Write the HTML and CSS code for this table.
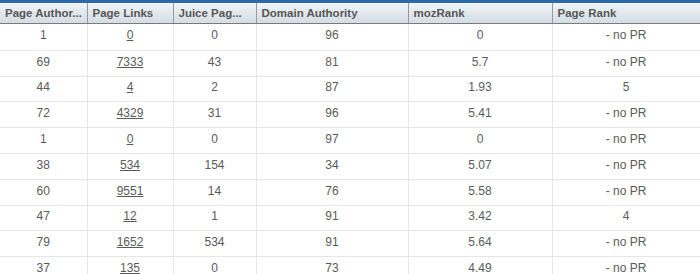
FILE: index.html
```html
<!DOCTYPE html>
<html>
<head>
<meta charset="utf-8">
<link rel="stylesheet" href="styles.css">
</head>
<body>
<div class="topbar"></div>
<table class="grid">
<colgroup>
<col class="c1"><col class="c2"><col class="c3"><col class="c4"><col class="c5"><col class="c6">
</colgroup>
<thead>
<tr><th>Page Author...</th><th>Page Links</th><th>Juice Pag...</th><th>Domain Authority</th><th>mozRank</th><th>Page Rank</th></tr>
</thead>
<tbody>
<tr><td>1</td><td><a href="#">0</a></td><td>0</td><td>96</td><td>0</td><td>- no PR</td></tr>
<tr><td>69</td><td><a href="#">7333</a></td><td>43</td><td>81</td><td>5.7</td><td>- no PR</td></tr>
<tr><td>44</td><td><a href="#">4</a></td><td>2</td><td>87</td><td>1.93</td><td>5</td></tr>
<tr><td>72</td><td><a href="#">4329</a></td><td>31</td><td>96</td><td>5.41</td><td>- no PR</td></tr>
<tr><td>1</td><td><a href="#">0</a></td><td>0</td><td>97</td><td>0</td><td>- no PR</td></tr>
<tr><td>38</td><td><a href="#">534</a></td><td>154</td><td>34</td><td>5.07</td><td>- no PR</td></tr>
<tr><td>60</td><td><a href="#">9551</a></td><td>14</td><td>76</td><td>5.58</td><td>- no PR</td></tr>
<tr><td>47</td><td><a href="#">12</a></td><td>1</td><td>91</td><td>3.42</td><td>4</td></tr>
<tr><td>79</td><td><a href="#">1652</a></td><td>534</td><td>91</td><td>5.64</td><td>- no PR</td></tr>
<tr><td>37</td><td><a href="#">135</a></td><td>0</td><td>73</td><td>4.49</td><td>- no PR</td></tr>
</tbody>
</table>
</body>
</html>
```
FILE: styles.css
```css
html, body {
  margin: 0;
  padding: 0;
  background: #ffffff;
  overflow: hidden;
}
body {
  font-family: "Liberation Sans", Arial, sans-serif;
  color: #555555;
  width: 700px;
  height: 274px;
}
.topbar {
  height: 3px;
  background: #2b6aa6;
}
.grid {
  border-collapse: collapse;
  table-layout: fixed;
  width: 700px;
}
.c1 { width: 87px; }
.c2 { width: 86px; }
.c3 { width: 83px; }
.c4 { width: 152px; }
.c5 { width: 144px; }
.c6 { width: 148px; }
.grid th {
  height: 20px;
  padding: 0 0 0 5px;
  text-align: left;
  font-size: 11.5px;
  font-weight: bold;
  color: #575757;
  background: linear-gradient(#eff4f7, #d3dde4);
  border-left: 1px solid #9a9a9a;
  border-right: 1px solid #9a9a9a;
  border-bottom: 1px solid #7a7a7a;
  white-space: nowrap;
  overflow: hidden;
}
.grid th:first-child { border-left: none; }
.grid tbody tr { height: 25.8px; }
.grid tbody tr:first-child { height: 26.8px; }
.grid td {
  padding: 0 0 2px 0;
  text-align: center;
  font-size: 12px;
  line-height: 13px;
  color: #5a5a5a;
  border: 1px solid #e6e6e6;
  border-top: none;
}
.grid td:first-child { border-left: none; }
.grid tbody tr:last-child td { border-bottom: none; }
.grid a {
  color: #5a5a5a;
  text-decoration: underline;
}
```
